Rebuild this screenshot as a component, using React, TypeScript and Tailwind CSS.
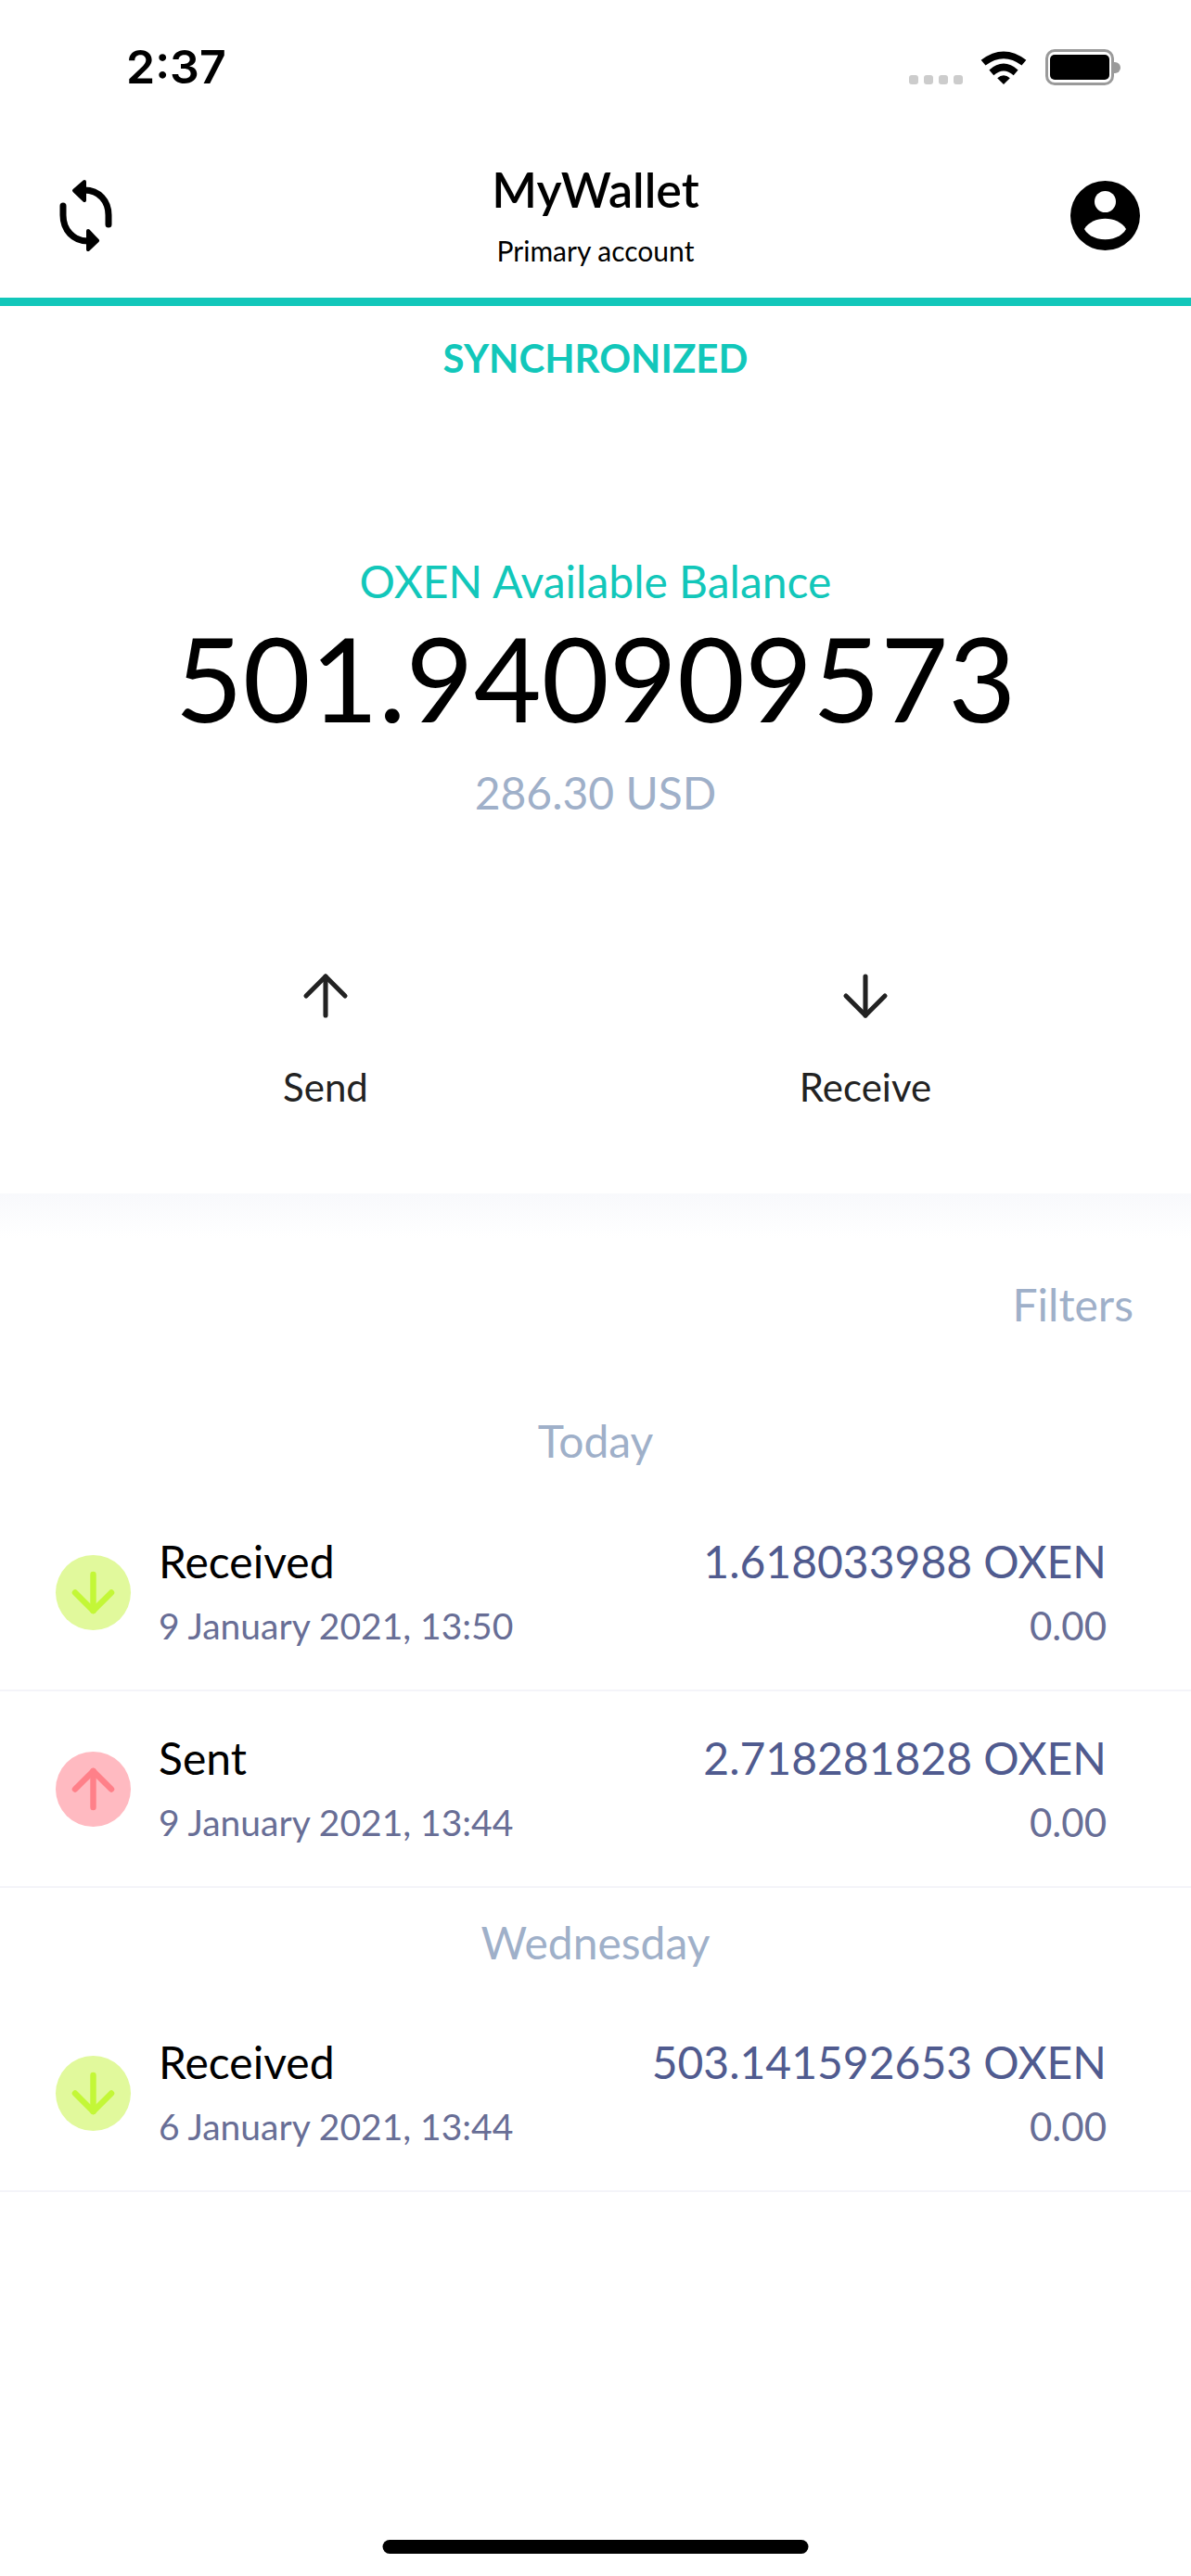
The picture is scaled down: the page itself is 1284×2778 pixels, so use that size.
import { ArrowDown, ArrowUp } from "lucide-react";

const lato = { fontFamily: "Lato, sans-serif" };

function StatusBar() {
  return (
    <div className="flex h-[144px] items-start justify-between pt-[44px] pr-[76px] pl-[136px]">
      <span className="font-['Inter',sans-serif] text-[50px] leading-[56px] font-semibold text-black">2:37</span>
      <div className="flex items-start pt-[9px]">
        <div className="mt-[28px] flex gap-[6px]">
          <span className="h-[10px] w-[10px] rounded-[3px] bg-[#cccccc]" />
          <span className="h-[10px] w-[10px] rounded-[3px] bg-[#cccccc]" />
          <span className="h-[10px] w-[10px] rounded-[3px] bg-[#cccccc]" />
          <span className="h-[10px] w-[10px] rounded-[3px] bg-[#cccccc]" />
        </div>
        <svg width="50" height="37" viewBox="0 0 50 38" className="mt-[1px] ml-[19px]">
          <path d="M0 11 Q25 -8 50 11 L45 17 Q25 2 5 17 Z" fill="#000" />
          <path d="M9 22 Q25 8 41 22 L36 28 Q25 18 14 28 Z" fill="#000" />
          <path d="M18 31 Q25 25 32 31 L25 38 Z" fill="#000" />
        </svg>
        <div className="ml-[20px] flex items-center">
          <div className="h-[39px] w-[74px] rounded-[10px] border-[3px] border-[#9a9a9a] p-[2px] py-[3px]">
            <div className="h-full w-full rounded-[5px] bg-black" />
          </div>
          <div className="h-[12px] w-[7px] rounded-r-[6px] bg-[#9a9a9a]" />
        </div>
      </div>
    </div>
  );
}

function Header() {
  return (
    <div className="flex h-[186px] items-center justify-between border-b-[9px] border-[#12c7ba] pr-[55px] pl-[63px]">
      <div className="w-[67px]">
        <svg width="60" height="77" viewBox="0 0 60 77" fill="none" stroke="#000" strokeWidth="7" strokeLinecap="round">
          <path d="M54 48 V38 C54 23 44 11 28 11" />
          <path d="M5 28 V38 C5 54 16 66 32 66" />
          <path d="M28 2 L17 11.5 L28 22 Z" fill="#000" strokeLinejoin="round" strokeWidth="4" />
          <path d="M32 55 L42 65.5 L32 75 Z" fill="#000" strokeLinejoin="round" strokeWidth="4" />
        </svg>
      </div>
      <div className="mb-[4px] flex flex-col items-center">
        <span className="text-[52px] leading-[60px] font-semibold text-black">MyWallet</span>
        <span className="mt-[18px] text-[30px] leading-[36px] text-black">Primary account</span>
      </div>
      <svg width="75" height="75" viewBox="0 0 75 75">
        <circle cx="37.5" cy="37.5" r="37.5" fill="#000" />
        <circle cx="37.5" cy="22.5" r="11.5" fill="#fff" />
        <path d="M15 52 C24 37 51 37 60 52 C52 67 23 67 15 52 Z" fill="#fff" />
      </svg>
    </div>
  );
}

function Balance() {
  return (
    <div className="flex flex-col items-center">
      <div className="mt-[31px] text-[42px] leading-[50px] font-bold text-[#12c7ba]">SYNCHRONIZED</div>
      <div className="mt-[188px] text-[48px] leading-[56px] text-[#12c7ba]">OXEN Available Balance</div>
      <div className="mt-[8px] text-[126px] leading-[136px] text-black">501.940909573</div>
      <div className="mt-[28px] text-[48px] leading-[56px] text-[#9fb0c9]">286.30 USD</div>
    </div>
  );
}

function Actions() {
  return (
    <div className="mt-[155px] grid grid-cols-2 px-[60px] pb-[89px]">
      <div className="flex flex-col items-center">
        <ArrowUp size={72} strokeWidth={1.7} color="#222222" />
        <span className="mt-[36px] text-[42px] leading-[52px] text-[#222222]">Send</span>
      </div>
      <div className="flex flex-col items-center">
        <ArrowDown size={72} strokeWidth={1.7} color="#222222" />
        <span className="mt-[36px] text-[42px] leading-[52px] text-[#222222]">Receive</span>
      </div>
    </div>
  );
}

type Tx = { kind: "in" | "out"; title: string; date: string; amount: string };

function Row({ tx }: { tx: Tx }) {
  const Icon = tx.kind === "in" ? ArrowDown : ArrowUp;
  return (
    <div className="flex h-[212px] items-center justify-between border-b-2 border-[#f4f4f9] pr-[91px] pl-[60px]">
      <div className="flex items-center">
        <div className={"flex h-[81px] w-[81px] items-center justify-center rounded-full " + (tx.kind === "in" ? "bg-[#e1f99c]" : "bg-[#ffbac1]")}>
          <Icon size={67} strokeWidth={2.3} color={tx.kind === "in" ? "#c3f737" : "#ff8089"} />
        </div>
        <div className="ml-[30px]">
          <div className="text-[48px] leading-[56px] text-black">{tx.title}</div>
          <div className="mt-[16px] text-[39px] leading-[50px] text-[#686e96]">{tx.date}</div>
        </div>
      </div>
      <div className="text-right">
        <div className="text-[48px] leading-[56px] text-[#505b8f]">{tx.amount} OXEN</div>
        <div className="mt-[16px] text-[42px] leading-[50px] text-[#686e96]">0.00</div>
      </div>
    </div>
  );
}

export default function App() {
  return (
    <div className="relative flex min-h-[2778px] flex-col bg-white" style={lato}>
      <StatusBar />
      <Header />
      <Balance />
      <Actions />
      <div className="h-[48px] bg-gradient-to-b from-[#f8f9fc] to-white" />
      <div className="mt-[44px] pr-[62px] text-right text-[48px] leading-[56px] text-[#9fb0c9]">Filters</div>
      <div className="mt-[91px] mb-[30px] text-center text-[48px] leading-[56px] text-[#9fb0c9]">Today</div>
      <Row tx={{ kind: "in", title: "Received", date: "9 January 2021, 13:50", amount: "1.618033988" }} />
      <Row tx={{ kind: "out", title: "Sent", date: "9 January 2021, 13:44", amount: "2.718281828" }} />
      <div className="mt-[31px] mb-[29px] text-center text-[48px] leading-[56px] text-[#9fb0c9]">Wednesday</div>
      <Row tx={{ kind: "in", title: "Received", date: "6 January 2021, 13:44", amount: "503.141592653" }} />
      <div className="absolute bottom-[24px] left-1/2 h-[15px] w-[459px] -translate-x-1/2 rounded-full bg-black" />
    </div>
  );
}
